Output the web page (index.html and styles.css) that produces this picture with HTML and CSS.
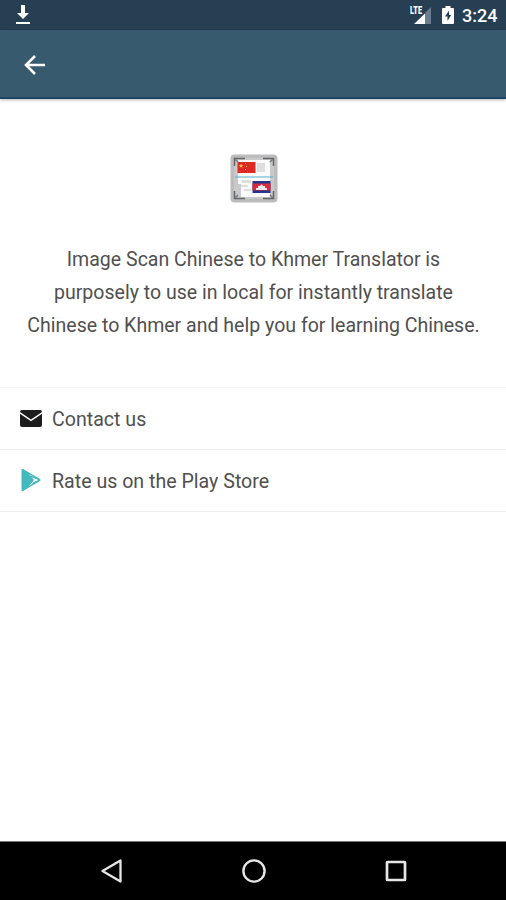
FILE: index.html
```html
<!DOCTYPE html>
<html lang="en">
<head>
    <meta charset="UTF-8">
    <meta name="viewport" content="width=device-width, initial-scale=1.0">
    <title>About</title>
    <link rel="stylesheet" href="styles.css">
</head>
<body>
    <div class="status-bar">
        <svg class="download" width="16" height="22" viewBox="0 0 16 22">
            <path d="M6 1h4v8h4l-6 6-6-6h4zM1 18h14v2H1z" fill="#fff"/>
        </svg>
        <svg class="signal" width="22" height="20" viewBox="0 0 22 20">
            <path d="M21 3v17h-6V9z" fill="#6b7e8d"/>
            <path d="M15 9.500v10.500H4z" fill="#fff"/>
            <text class="lte" x="0" y="10" textLength="12" lengthAdjust="spacingAndGlyphs">LTE</text>
        </svg>
        <svg class="battery" width="12" height="18" viewBox="0 0 12 18">
            <path d="M3.500 0h5v2H11q1 0 1 1v14q0 1-1 1H1q-1 0-1-1V3q0-1 1-1h2.500z" fill="#fff"/>
            <path d="M7 4.500L3 10.500h2.500v4.500L9.200 9H7z" fill="#263f52"/>
        </svg>
        <span class="time">3:24</span>
    </div>

    <div class="toolbar">
        <a class="back" href="#" aria-label="Back">
            <svg width="22" height="22" viewBox="0 0 22 22">
                <path d="M21 11H2.500M11 2l-9 9 9 9" fill="none" stroke="#fff" stroke-width="2.500"/>
            </svg>
        </a>
    </div>

    <div class="content">
        <svg class="logo" width="48" height="49" viewBox="0 0 48 49">
            <rect x=".5" y=".5" width="47" height="48" rx="4" fill="#bcbcbc"/>
            <rect x="4" y="4" width="40" height="41" fill="#c9c9c9"/>
            <path d="M8 6h32v37H11V30H8z" fill="#fafafa"/>
            <path d="M4.500 12V4.500H15M33 4.500h10.500V12M4.500 37v7.500H15M33 44.500h10.500V37" fill="none" stroke="#62666b" stroke-width="1.500"/>
            <path d="M5 5l3 3M43 5l-3 3M5 44l3-3M43 44l-3-3" stroke="#777" stroke-width="1.500"/>
            <path d="M27 9h8v9h-8zM12 26h9v3h-9zM11 31h7v2h-7zM14 35h7v2h-7z" fill="#dedede"/>
            <rect x="7.500" y="8" width="18" height="11" fill="#de2924"/>
            <path d="M11 9.500l.6 1.600h1.700l-1.300 1 .5 1.700-1.500-1-1.500 1 .5-1.700-1.300-1h1.700zM15 9h1v1h-1zM16 12h1v1h-1zM15 15h1v1h-1z" fill="#f5c33b"/>
            <path d="M5 23h38" stroke="#55add1" stroke-width="1.200"/>
            <rect x="22.500" y="27" width="18" height="12" fill="#24368f"/>
            <rect x="22.500" y="29.500" width="18" height="7" fill="#d82b3c"/>
            <path d="M26 36v-2h2v-2h2l1.500-2 1.500 2h2v2h2v2z" fill="#f4e8ee"/>
        </svg>

        <p class="description">
            <span class="line">Image Scan Chinese to Khmer Translator is</span>
            <span class="line">purposely to use in local for instantly translate</span>
            <span class="line">Chinese to Khmer and help you for learning Chinese.</span>
        </p>

        <ul class="list">
            <li class="item">
                <svg width="22" height="18" viewBox="0 0 22 18">
                    <path d="M2 0h18q2 0 2 2L11 9.500 0 2q0-2 2-2z" fill="#1d1d1d"/>
                    <path d="M0 3.700l11 7.500 11-7.500V15q0 2-2 2H2q-2 0-2-2z" fill="#1d1d1d"/>
                </svg>
                <span>Contact us</span>
            </li>
            <li class="item">
                <svg width="22" height="24" viewBox="0 0 22 24">
                    <path d="M1.500 0Q2-.5 3 0l17 10q1 1 0 2L3 22q-1 .5-1.500 0z" fill="#42b9bd"/>
                    <path d="M9 5l9 6-9 6 5-6z" fill="#fff"/>
                    <path d="M10.500 7l5.500 2.500M16 12.500l-3.500 2" stroke="#42b9bd" stroke-width="1.200"/>
                </svg>
                <span>Rate us on the Play Store</span>
            </li>
        </ul>
    </div>

    <div class="nav-bar">
        <svg width="24" height="26" viewBox="0 0 24 26">
            <path d="M20.500 2.500v21L2.500 13z" fill="none" stroke="#e6e6e6" stroke-width="2.300" stroke-linejoin="round"/>
        </svg>
        <svg width="24" height="26" viewBox="0 0 24 26">
            <circle cx="12" cy="13" r="10.600" fill="none" stroke="#e6e6e6" stroke-width="2.400"/>
        </svg>
        <svg width="24" height="26" viewBox="0 0 24 26">
            <rect x="3" y="4" width="18" height="18" rx=".5" fill="none" stroke="#e6e6e6" stroke-width="2.700"/>
        </svg>
    </div>
</body>
</html>
```
FILE: styles.css
```css
body {
    margin: 0;
    height: 900px;
    display: flex;
    flex-direction: column;
    background-color: #fff;
    font-family: Roboto, sans-serif;
    color: #505050;
    overflow: hidden;
}

.status-bar {
    display: flex;
    align-items: center;
    box-sizing: border-box;
    height: 30px;
    padding: 0 9px 0 15px;
    background-color: #263f52;
}

.signal {
    margin-left: auto;
    margin-top: -2px;
}

.lte {
    font-size: 10px;
    font-weight: 900;
    fill: #fff;
}

.battery {
    margin-left: 10px;
}

.time {
    width: 35px;
    margin-left: 8px;
    margin-top: 1px;
    color: #fff;
    font-size: 18px;
    font-weight: 500;
    white-space: nowrap;
}

.toolbar {
    display: flex;
    align-items: center;
    box-sizing: border-box;
    height: 69px;
    padding: 2px 0 0 24px;
    background-color: #375a6f;
    border-bottom: 2px solid #1b4560;
    box-shadow: 0 1px 3px rgba(0, 0, 0, 0.3);
}

.back {
    display: flex;
}

.content {
    flex: 1;
    display: flex;
    flex-direction: column;
    align-items: center;
    padding-top: 55px;
}

.logo {
    margin-left: 2px;
}

.description {
    margin: 40px 0 45px 1px;
    font-size: 19.55px;
    line-height: 33px;
    text-align: center;
}

.line {
    display: block;
    white-space: nowrap;
}

.list {
    width: 100%;
    margin: 0;
    padding: 0;
    list-style: none;
    border-top: 1px solid #f5f5f5;
}

.item {
    display: flex;
    align-items: center;
    gap: 10px;
    box-sizing: border-box;
    height: 62px;
    padding: 1px 20px 0;
    border-bottom: 1px solid #f0f0f0;
    font-size: 19.6px;
}

.nav-bar {
    display: flex;
    justify-content: center;
    align-items: center;
    gap: 118px;
    box-sizing: border-box;
    height: 59px;
    padding-left: 2px;
    background-color: #000;
    border-top: 1px solid #777;
}
```
